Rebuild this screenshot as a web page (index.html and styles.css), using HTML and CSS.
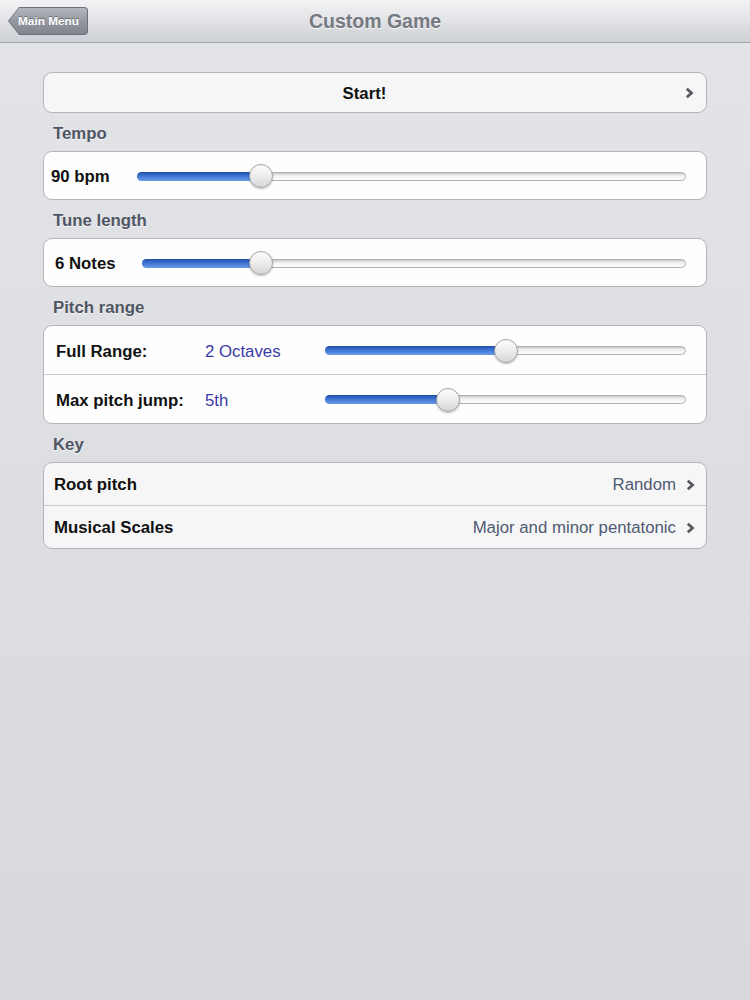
FILE: index.html
```html
<!DOCTYPE html>
<html>
<head>
<meta charset="utf-8">
<link rel="stylesheet" href="styles.css">
</head>
<body>
<header class="navbar">
  <div class="back-outer"><div class="back-inner">Main Menu</div></div>
  <h1 class="title">Custom Game</h1>
</header>
<main class="content">
  <div class="group start-group">
    <div class="start-row">
      <span class="start-text">Start!</span>
      <svg class="chev" width="9" height="12" viewBox="0 0 9 12"><polyline points="1.8,1.8 6.5,6 1.8,10.2" fill="none" stroke="#58595e" stroke-width="2.8"/></svg>
    </div>
  </div>

  <div class="section-label">Tempo</div>
  <div class="group white">
    <div class="slider-row tempo">
      <span class="row-label w-tempo">90 bpm</span>
      <div class="track"><div class="fill" style="width:22.4%"></div><div class="thumb" style="left:22.4%"></div></div>
    </div>
  </div>

  <div class="section-label">Tune length</div>
  <div class="group white">
    <div class="slider-row tune">
      <span class="row-label w-tune">6 Notes</span>
      <div class="track"><div class="fill" style="width:21.7%"></div><div class="thumb" style="left:21.7%"></div></div>
    </div>
  </div>

  <div class="section-label">Pitch range</div>
  <div class="group white">
    <div class="slider-row pitch">
      <span class="row-label w-pitch">Full Range:</span>
      <span class="row-value">2 Octaves</span>
      <div class="track"><div class="fill" style="width:50.1%"></div><div class="thumb" style="left:50.1%"></div></div>
    </div>
    <div class="slider-row pitch divided">
      <span class="row-label w-pitch">Max pitch jump:</span>
      <span class="row-value">5th</span>
      <div class="track"><div class="fill" style="width:34%"></div><div class="thumb" style="left:34%"></div></div>
    </div>
  </div>

  <div class="section-label">Key</div>
  <div class="group">
    <div class="nav-row">
      <span class="nav-label">Root pitch</span>
      <span class="nav-value">Random</span>
      <svg class="chev" width="9" height="12" viewBox="0 0 9 12"><polyline points="1.8,1.8 6.5,6 1.8,10.2" fill="none" stroke="#58595e" stroke-width="2.8"/></svg>
    </div>
    <div class="nav-row divided">
      <span class="nav-label">Musical Scales</span>
      <span class="nav-value">Major and minor pentatonic</span>
      <svg class="chev" width="9" height="12" viewBox="0 0 9 12"><polyline points="1.8,1.8 6.5,6 1.8,10.2" fill="none" stroke="#58595e" stroke-width="2.8"/></svg>
    </div>
  </div>
</main>
</body>
</html>
```

FILE: styles.css
```css
html, body {
  margin: 0;
  padding: 0;
}
body {
  width: 750px;
  height: 1000px;
  font-family: "Liberation Sans", Arial, sans-serif;
  background: linear-gradient(#e3e4e8, #dcdde1 60%, #d8d9dd);
  overflow: hidden;
}
.navbar {
  height: 42px;
  border-bottom: 1px solid #a2a5ab;
  background: linear-gradient(#f3f3f5, #e3e4e7 45%, #cdd0d5);
  display: flex;
  align-items: center;
  box-sizing: content-box;
}
.back-outer {
  margin-left: 8px;
  width: 80px;
  height: 28px;
  background: #6d7078;
  clip-path: polygon(0 50%, 11px 0, 100% 0, 100% 100%, 11px 100%);
  border-radius: 0 4px 4px 0;
  display: flex;
  padding: 1px;
  box-sizing: border-box;
}
.back-inner {
  flex: 1;
  background: linear-gradient(#b4b7bd, #9498a0 50%, #80848c);
  clip-path: polygon(0 50%, 10px 0, 100% 0, 100% 100%, 10px 100%);
  border-radius: 0 3px 3px 0;
  color: #fff;
  font-size: 11.8px;
  font-weight: bold;
  display: flex;
  align-items: center;
  padding-left: 9px;
  white-space: nowrap;
  text-shadow: 0 -1px 0 rgba(0,0,0,0.35);
}
.title {
  margin: 0;
  flex: 1;
  text-align: center;
  font-size: 19.5px;
  font-weight: bold;
  color: #757a82;
  text-shadow: 0 1px 0 rgba(255,255,255,0.8);
  margin-right: 88px;
}
.content {
  padding: 29px 43px 0 43px;
}
.group {
  border: 1px solid #b3b5ba;
  border-radius: 9px;
  background: #f6f6f7;
  overflow: hidden;
}
.group.white {
  background: #fefefe;
}
.start-row {
  height: 39px;
  display: flex;
  align-items: center;
  padding-right: 12px;
}
.start-text {
  flex: 1;
  text-align: center;
  font-size: 16.8px;
  font-weight: bold;
  color: #111;
  padding-top: 3px;
}
.chev {
  display: block;
  flex: none;
  margin-top: 1px;
}
.section-label {
  height: 38px;
  line-height: 41px;
  padding-left: 10px;
  font-size: 16.8px;
  font-weight: bold;
  color: #4f5562;
  text-shadow: 0 1px 0 rgba(255,255,255,0.7);
}
.slider-row {
  height: 47px;
  display: flex;
  align-items: center;
  padding-right: 20px;
}
.slider-row.pitch {
  height: 48px;
}
.slider-row.divided {
  border-top: 1px solid #c8c9cc;
}
.slider-row.tempo { padding-left: 7px; }
.slider-row.tune { padding-left: 11px; }
.slider-row.pitch { padding-left: 12px; }
.row-label {
  font-size: 16.8px;
  font-weight: bold;
  color: #111;
  flex: none;
  white-space: nowrap;
  padding-top: 3px;
}
.w-tempo { width: 86px; }
.w-tune { width: 87px; }
.w-pitch { width: 149px; }
.row-value {
  width: 120px;
  flex: none;
  font-size: 16.8px;
  color: #3a3aa8;
  padding-top: 3px;
}
.track {
  flex: 1;
  height: 9px;
  border-radius: 5px;
  background: linear-gradient(#c9c9c9, #f2f2f2 40%, #fdfdfd);
  border: 1px solid #b0b0b0;
  box-sizing: border-box;
  position: relative;
  margin-top: 1px;
}
.fill {
  height: 9px;
  margin: -1px 0 0 -1px;
  border-radius: 5px 0 0 5px;
  background: linear-gradient(#1f4fa6, #3d75d6 45%, #6a9ce6);
}
.thumb {
  position: absolute;
  top: 50%;
  width: 24px;
  height: 24px;
  margin: -12px 0 0 -12px;
  border-radius: 50%;
  background: linear-gradient(#fdfdfd, #ececec 50%, #d6d6d6);
  border: 1px solid #a3a3a3;
  box-sizing: border-box;
  box-shadow: 0 1px 2px rgba(0,0,0,0.25);
}
.nav-row {
  height: 42px;
  display: flex;
  align-items: center;
  padding-left: 10px;
  padding-right: 11px;
}
.nav-row.divided {
  border-top: 1px solid #c8c9cc;
}
.nav-label {
  flex: 1;
  font-size: 16.8px;
  font-weight: bold;
  color: #111;
  padding-top: 2px;
}
.nav-value {
  font-size: 16.8px;
  color: #4f5a72;
  margin-right: 10px;
  padding-top: 2px;
}
```
